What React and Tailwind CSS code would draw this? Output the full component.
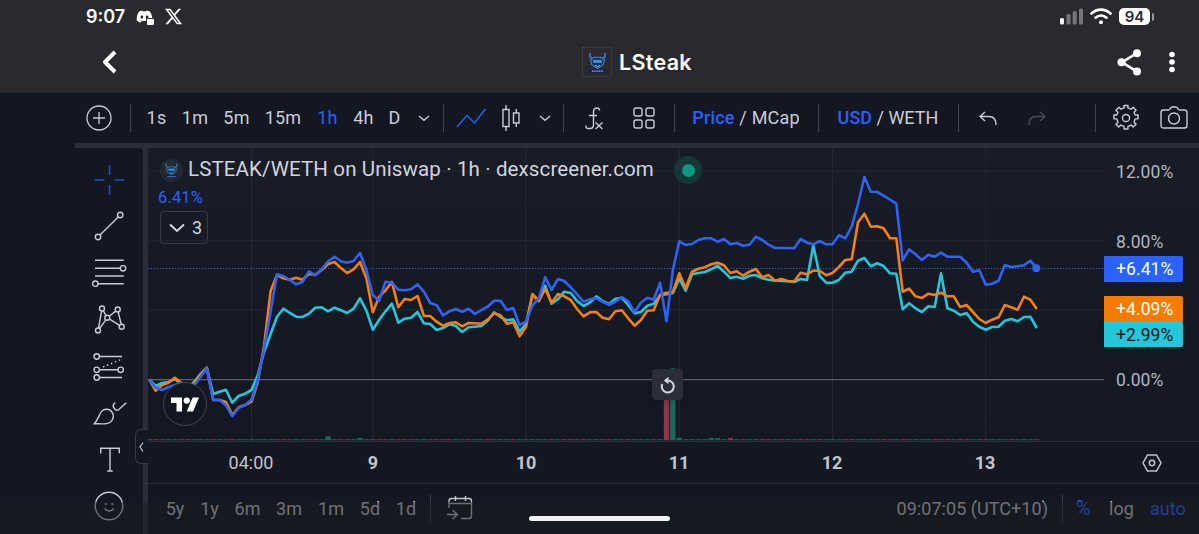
import React from "react";
import { FaDiscord, FaXTwitter } from "react-icons/fa6";

const START_X = 149.3;
const STEP = 6.385;

// one value per hour, vertical position inside the pane
const main = [
  379.5, 387.7, 390, 387, 385, 383, 390, 386, 377, 368.3, 400, 400, 405.3, 416.2, 407.7, 405, 399.5, 380, 348.3, 311.7,
  274.3, 276, 280, 284.3, 282, 271.3, 275.3, 269.3, 261.3, 256.7, 261.3, 262.7, 261, 253, 270, 295, 300.7, 281.7, 282.7, 289.7,
  290.3, 289.3, 284.3, 291.7, 303, 305.3, 315.3, 311.3, 309, 311.7, 308.7, 314, 310, 306.7, 300.7, 300.7, 310, 308, 325, 321.7,
  305.3, 298.3, 277.3, 290, 279, 281, 287.3, 294.3, 301.7, 299.3, 298.3, 301.7, 304.7, 301.7, 297, 301.3, 312, 302.7, 297.7, 299.7,
  282.7, 321.3, 270, 241.3, 245, 244, 240, 238.3, 238.3, 241.7, 239, 244.3, 243, 245.7, 244.7, 236.7, 240, 244.7, 248, 248,
  248, 248.3, 239, 242.7, 244.3, 241, 244.3, 244.3, 235.3, 238.3, 226.7, 204, 177, 191.7, 192, 195.7, 199.7, 203.7, 260.3, 249.3,
  254.3, 260, 254.7, 256.7, 252.7, 256.7, 256.7, 256.7, 262.7, 271.7, 270.3, 284.7, 283.7, 280.7, 265, 267, 266.3, 265.3, 260.7, 268.3,
];

const compareA = [
  379.5, 390.7, 385, 382.7, 377.7, 382.7, 390, 383.3, 375, 367.7, 400, 400, 402, 415, 407.3, 405, 401.7, 382, 345, 291,
  275, 278.3, 279.7, 277.7, 279.7, 274, 274.7, 270, 264, 262, 268, 273, 269.3, 262, 278.3, 312.3, 296.7, 290.3, 282, 307.3,
  299, 300, 296, 316, 316, 321.7, 325.7, 323, 322.3, 326.3, 323, 323.3, 323.7, 319.7, 313.3, 315.3, 323.7, 322.3, 336.3, 326.7,
  294, 301, 289, 302.7, 294, 296.3, 300, 309, 316.3, 312.3, 312, 317.7, 319.3, 311.3, 310.3, 318.3, 325.7, 320, 310.7, 310.3,
  294.7, 292.7, 292, 273.3, 288.3, 271.7, 268.7, 267.3, 264.3, 262.7, 265.3, 273, 271.3, 275.7, 271.7, 269, 277.3, 275, 280.7, 279,
  281, 281.3, 272.7, 274.3, 270.7, 270.7, 275.3, 273, 267, 260, 259.3, 222.3, 213.7, 226.7, 226.3, 228.3, 238.3, 238.3, 291.7, 288.7,
  296.3, 298, 293.7, 295, 292.7, 296.3, 296.3, 307, 305, 312, 319, 323, 319.7, 317.3, 305, 307.3, 309.7, 296.7, 299.7, 309,
];

const compareB = [
  379.5, 386, 383, 382, 379, 384, 388, 382, 374, 368, 394, 391.7, 389.7, 402.7, 396, 393.7, 390, 375, 351.7, 334,
  316.7, 308.7, 313, 316.7, 317, 313.7, 307.7, 307.3, 311.3, 307.7, 310.3, 313, 308.7, 298.3, 310.7, 329.7, 319.7, 311.3, 303.7, 322.7,
  318.7, 317.7, 312, 323.3, 324, 330, 328, 324.3, 326, 332, 327.3, 326.7, 326, 320.7, 312.3, 317, 320.3, 319.3, 331.3, 324,
  295, 301, 285.7, 303.7, 299.3, 291.7, 293, 301, 306, 302.7, 296.3, 301, 304, 298.7, 297.7, 305, 313.3, 312, 305.7, 303.7,
  295.3, 294.3, 293, 278.7, 290.7, 274.3, 273, 272, 269.3, 265.7, 271.7, 278, 276.7, 278.7, 275.7, 275, 278.3, 279.7, 280.7, 281,
  281.3, 282, 279, 280, 245.3, 276, 282.7, 282.7, 280, 272.7, 271.7, 260.7, 258, 266.3, 263.3, 266, 273.3, 273.7, 309.3, 303.3,
  308.3, 312, 306.3, 307, 273.3, 308.3, 310.7, 315, 313, 321.7, 326.7, 329.7, 327, 326.7, 320.7, 319, 321.3, 317, 316.7, 328,
];

// down bars, every other hour closed up
const downBars = [
  1, 2, 5, 6, 10, 12, 13, 20, 21, 22, 25, 26, 30, 31, 35, 36, 37, 39, 40, 41, 44, 45, 46, 47, 50, 53, 54, 57, 63, 65, 66, 67,
  68, 71, 72, 75, 79, 81, 91, 93, 96, 97, 99, 102, 103, 105, 109, 110, 114, 115, 116, 118, 119, 123, 124, 125, 127, 128, 131, 135, 139,
];
const volumeHeights = { 28: 4, 33: 2.2, 81: 60, 82: 72, 83: 2.5, 88: 2.2, 89: 2.2, 91: 2.2 };

const gridY = [171.3, 240.7, 310];
const gridX = [251.5, 372.8, 526, 679.3, 832.5, 985.7];

const toPoints = (values) => values.map((y, i) => `${(START_X + i * STEP).toFixed(1)},${y}`).join(" ");

const intervals = [
  { label: "1s", className: "w-[35px]" },
  { label: "1m", className: "w-[42px]" },
  { label: "5m", className: "w-[41px]" },
  { label: "15m", className: "w-[52px]" },
  { label: "1h", className: "w-[37px] text-[#2962ff]" },
  { label: "4h", className: "w-[35px]" },
  { label: "D", className: "w-[27px]" },
];

const ranges = [
  { label: "5y", className: "w-[34px]" },
  { label: "1y", className: "w-[35px]" },
  { label: "6m", className: "w-[41px]" },
  { label: "3m", className: "w-[42px]" },
  { label: "1m", className: "w-[42px]" },
  { label: "5d", className: "w-[36px]" },
  { label: "1d", className: "w-[36px]" },
];

const Divider = ({ className }) => (
  <div className={`flex shrink-0 justify-center ${className}`}>
    <div className="h-7 w-px bg-[#434651]" />
  </div>
);

const Cell = ({ className, children }) => (
  <button className={`flex shrink-0 items-center justify-center whitespace-nowrap ${className}`}>{children}</button>
);

const Chevron = () => (
  <svg width="12" height="7" viewBox="0 0 12 7" fill="none" stroke="currentColor" strokeWidth="1.4">
    <path d="M1 1l5 4.3L11 1" />
  </svg>
);

const TokenLogo = ({ size }) => (
  <svg width={size} height={size} viewBox="0 0 24 24" fill="none">
    <path d="M3.500 1c-1 4 .5 6.500 5 7M20.500 1c1 4-.5 6.500-5 7" stroke="#3a72b0" strokeWidth="2.200" />
    <path d="M4 8.500L8.500 6h7L20 8.500l-1.500 6L12 19l-6.500-4.500z" fill="#12305a" stroke="#4584c4" strokeWidth="1.200" />
    <path d="M7 9h10v3.500H7z" fill="#3f8fd6" />
    <path d="M9 15l3 2 3-2" stroke="#6db4ea" strokeWidth="1.200" />
    <path d="M1 20h22v3.500H1z" fill="#0f2350" />
    <path d="M5.500 21.800h13" stroke="#7fa6d0" strokeWidth="1.400" strokeDasharray="1.500 .5" />
  </svg>
);

const ToolIcon = ({ className = "", children }) => (
  <button className={`flex h-[46.6px] w-full shrink-0 items-center justify-center ${className}`}>
    <svg className="overflow-visible" width="34" height="34" viewBox="0 0 34 34" fill="none" stroke="currentColor" strokeWidth="1.400">
      {children}
    </svg>
  </button>
);

const Header = () => (
  <header className="h-[93px] shrink-0 bg-[#2a2a2e] text-white">
    <div className="flex h-[33px] items-center pl-[86px] pr-[45px]">
      <span className="w-[50px] font-['Inter'] text-[18px] font-semibold leading-none">9:07</span>
      <span className="relative mr-[10px] h-[18px] w-[18px]">
        <FaDiscord size={17} />
        <span className="absolute bottom-[1px] right-0 h-[7px] w-[8px] rounded-[1.5px] border-l border-t border-[#2a2a2e] bg-white" />
      </span>
      <FaXTwitter size={19} />
      <div className="ml-auto flex items-center gap-[7px]">
        <svg width="23" height="17" viewBox="0 0 23 17">
          <rect x="0" y="10" width="4" height="6.500" rx="1.500" fill="#fff" />
          <rect x="6.500" y="6" width="4" height="10.500" rx="1.500" fill="#77777b" />
          <rect x="12.700" y="3" width="4" height="13.500" rx="1.500" fill="#77777b" />
          <rect x="19" y=".5" width="4" height="16" rx="1.500" fill="#77777b" />
        </svg>
        <svg width="22" height="17" viewBox="0 0 22 17" fill="none" stroke="#fff" strokeWidth="2.600" strokeLinecap="round">
          <path d="M1.500 5.500a13.500 13.500 0 0 1 19 0M5.500 9.700a8 8 0 0 1 11 0" />
          <circle cx="11" cy="14.300" r="2" fill="#fff" stroke="none" />
        </svg>
        <div className="flex items-center gap-[2px]">
          <span className="flex h-[17px] w-[31px] items-center justify-center rounded-[5px] bg-white font-['Inter'] text-[15px] font-semibold leading-none text-[#2a2a2e]">
            94
          </span>
          <span className="h-2 w-[2px] rounded-r bg-[#9a9a9d]" />
        </div>
      </div>
    </div>
    <div className="flex h-[58px] items-center pl-[101px] pr-[24px]">
      <svg width="16" height="24" viewBox="0 0 16 24" fill="none" stroke="currentColor" strokeWidth="4">
        <path d="M14 2L4 12l10 10" strokeLinejoin="round" />
      </svg>
      <div className="ml-[465px] flex items-center">
        <span className="flex h-[30px] w-[30px] items-center justify-center border border-dotted border-[#4a4644]">
          <TokenLogo size={21} />
        </span>
        <h1 className="ml-[7px] pt-px font-['Inter'] text-[21.500px] font-semibold leading-none tracking-[0.3px]">LSteak</h1>
      </div>
      <div className="ml-auto flex items-center gap-[27px]">
        <svg width="25" height="27" viewBox="0 0 25 27" fill="currentColor">
          <path d="M20 4L5 13.300 20 22.600" fill="none" stroke="currentColor" strokeWidth="2.600" />
          <circle cx="20" cy="4.200" r="4" />
          <circle cx="4.500" cy="13.300" r="4" />
          <circle cx="20" cy="22.500" r="4" />
        </svg>
        <svg width="6" height="22" viewBox="0 0 6 22" fill="currentColor">
          <circle cx="3" cy="3.500" r="2.800" />
          <circle cx="3" cy="11" r="2.800" />
          <circle cx="3" cy="18.500" r="2.800" />
        </svg>
      </div>
    </div>
  </header>
);

const Toolbar = () => (
  <div className="ml-[75px] flex h-[50px] shrink-0 items-center text-[18px] tracking-[0.2px] text-[#c9ccd6]">
    <Cell className="w-[48px]">
      <svg width="26" height="26" viewBox="0 0 26 26" fill="none" stroke="currentColor" strokeWidth="1.300">
        <circle cx="13" cy="13" r="12" />
        <path d="M13 7v12M7 13h12" />
      </svg>
    </Cell>
    <Divider className="mr-[2px] w-[14px]" />
    <div className="flex pb-px">
      {intervals.map((item) => (
        <Cell key={item.label} className={item.className}>
          {item.label}
        </Cell>
      ))}
    </div>
    <Cell className="w-[32px]">
      <Chevron />
    </Cell>
    <Divider className="w-[6px]" />
    <Cell className="w-[50px] pr-px text-[#2962ff]">
      <svg width="30" height="20" viewBox="0 0 30 20" fill="none" stroke="currentColor" strokeWidth="1.400">
        <path d="M1 19L11 7.500l7.500 7.500L29.500 1" />
      </svg>
    </Cell>
    <Cell className="w-[30px] pr-px">
      <svg width="18" height="26" viewBox="0 0 18 26" fill="none" stroke="currentColor" strokeWidth="1.400">
        <path d="M1 4.500h6v17H1zM4 0v4.500M4 21.500V26M11.500 8h5.500v10h-5.500zM14.300 4v4M14.300 18v4" />
      </svg>
    </Cell>
    <Cell className="w-[36px] pl-px">
      <Chevron />
    </Cell>
    <Divider className="w-[3px]" />
    <Cell className="w-[58px]">
      <svg width="18" height="23" viewBox="0 0 18 23" fill="none" stroke="currentColor" strokeWidth="1.400">
        <path d="M14.500 3.500V2.500Q14 1 12 1 8.500 1 8.500 5v13q0 3.500-3.500 3.500H3Q1 21.500 1 19v-.5M4 8.500h8M10.500 15.500l7 6.500M17.500 15.500l-7 6.500" />
      </svg>
    </Cell>
    <Cell className="w-[42px] pr-px">
      <svg width="22" height="22" viewBox="0 0 22 22" fill="none" stroke="currentColor" strokeWidth="1.400">
        <rect x="1" y="1" width="8" height="8" rx="2" />
        <rect x="13" y="1" width="8" height="8" rx="2" />
        <rect x="1" y="13" width="8" height="8" rx="2" />
        <rect x="13" y="13" width="8" height="8" rx="2" />
      </svg>
    </Cell>
    <Divider className="w-[18px]" />
    <Cell className="w-[126px] pb-px">
      <span className="font-medium text-[#2962ff]">Price</span>
      <span className="whitespace-pre"> / MCap</span>
    </Cell>
    <Divider className="w-[18px]" />
    <Cell className="w-[122px] pb-px tracking-normal">
      <span className="font-medium text-[#2962ff]">USD</span>
      <span className="whitespace-pre"> / WETH</span>
    </Cell>
    <Divider className="w-[18px]" />
    <Cell className="w-[42px]">
      <svg width="18" height="15" viewBox="0 0 18 15" fill="none" stroke="currentColor" strokeWidth="1.400">
        <path d="M6 1L1 5.500 6 10M1 5.500h9q7 0 7 8.500" />
      </svg>
    </Cell>
    <Cell className="w-[55px] text-[#4a4e59]">
      <svg width="18" height="15" viewBox="0 0 18 15" fill="none" stroke="currentColor" strokeWidth="1.400">
        <path d="M12 1l5 4.500-5 4.500M17 5.500H8Q1 5.500 1 14" />
      </svg>
    </Cell>
    <Divider className="ml-auto w-[10px]" />
    <Cell className="w-[51px]">
      <svg width="30" height="30" viewBox="0 0 28 28" fill="none" stroke="currentColor" strokeWidth="1.300" strokeLinejoin="round">
        <circle cx="14" cy="14" r="3.300" />
        <path d="M12.200 2.300h3.600v2.300l3 1.200 1.900-1.800 2.700 2.700-1.900 1.900 1.100 2.600h2.700v3.600h-2.700l-1.100 3.100 1.900 1.900-2.700 2.700-1.900-1.900-3 1.200v2.400h-3.600v-2.400l-3-1.200-1.900 1.900-2.700-2.700 1.900-1.900-1.100-3.100H2.700v-3.600h2.700l1.100-2.600-1.900-1.900 2.700-2.700 1.900 1.800 3-1.200z" />
      </svg>
    </Cell>
    <Cell className="mr-[3px] w-[45px]">
      <svg width="28" height="24" viewBox="0 0 28 24" fill="none" stroke="currentColor" strokeWidth="1.400">
        <path d="M3.500 4h5q1 0 1.500-1l1-1.500q.3-.5 1-.5h4q.7 0 1 .5l1 1.500q.5 1 1.500 1h5Q27 4 27 6.500v13q0 2.500-2.500 2.500h-21Q1 22 1 19.500v-13Q1 4 3.500 4z" />
        <circle cx="14" cy="12.500" r="5.500" />
      </svg>
    </Cell>
  </div>
);

const Sidebar = () => (
  <aside className="relative flex w-[68px] shrink-0 flex-col rounded-tr-[4px] bg-[#131722] pt-[9px] text-[#c9ccd6]">
    <ToolIcon className="text-[#2450c4]">
      <path d="M2.500 17h10M22.500 17h10M17.500 2v10M17.500 22v10" />
    </ToolIcon>
    <ToolIcon>
      <circle cx="28.200" cy="5" r="2.700" />
      <circle cx="6" cy="27" r="2.700" />
      <path d="M8 25L26.200 7" />
    </ToolIcon>
    <ToolIcon>
      <path d="M3 4.300h28.700M3 12.300h25.300M3 20h28.700M6 27.700h25.700" />
      <circle cx="31" cy="12.300" r="2.700" />
      <circle cx="3.300" cy="27.700" r="2.700" />
    </ToolIcon>
    <ToolIcon>
      <circle cx="10" cy="5.500" r="2.500" />
      <circle cx="25.700" cy="6.500" r="2.500" />
      <circle cx="15.300" cy="14.800" r="2.500" />
      <circle cx="6" cy="27.500" r="2.500" />
      <circle cx="29.700" cy="23.800" r="2.500" />
      <path d="M9.600 8L6.500 25M11.200 7.700l2.900 5M17.200 13.200l6.500-5.100M13.900 16.900L7.500 25.500M17.600 16.200l10 6.200M26.200 9l3 12.300" />
    </ToolIcon>
    <ToolIcon>
      <circle cx="4.700" cy="6.500" r="2.700" />
      <circle cx="4.700" cy="19.800" r="2.700" />
      <circle cx="4.700" cy="27.500" r="2.700" />
      <circle cx="28.700" cy="19.800" r="2.700" />
      <path d="M7.400 6.500H30M7.400 19.800H26M7.400 27.500H30" />
      <path d="M11 17l17-7.200" strokeDasharray="1.500 2.800" />
    </ToolIcon>
    <ToolIcon>
      <path d="M2.300 27.700C8 22 7 13.300 14.700 13.300c6 0 8.500 7.500 4.800 11.800-3 3.500-8 2.700-17.200 2.600zM23.300 6.700l-1.500 1.500c-2 2 1.500 6.800 4.200 6l8.300-7.500" />
    </ToolIcon>
    <ToolIcon>
      <path d="M8.700 10.300v-5h18.600v5M18 5.300V28M15.300 28h5.400" />
    </ToolIcon>
    <ToolIcon>
      <circle cx="17" cy="17" r="13.800" />
      <path d="M12.500 19.500q4.800 5 9.300 0" />
      <circle cx="13.800" cy="15" r="1.100" fill="currentColor" stroke="none" />
      <circle cx="20.300" cy="15" r="1.100" fill="currentColor" stroke="none" />
    </ToolIcon>
    <button className="absolute left-[60px] top-[281px] z-10 flex h-[35px] w-[13px] items-center rounded-l-[6px] border border-r-0 border-[#363a45] bg-[#131722] pl-[3px]">
      <svg width="5" height="10" viewBox="0 0 5 10" fill="none" stroke="#c9ccd6" strokeWidth="1.200">
        <path d="M4 .5L1 5l3 4.500" />
      </svg>
    </button>
  </aside>
);

const Pane = () => (
  <div className="relative h-[293px] w-[956px] shrink-0">
    <svg className="block" width="956" height="293" viewBox="148 148 956 293" fill="none">
      <g stroke="#242833">
        {gridY.map((y) => (
          <path key={y} d={`M148 ${y}H1104`} />
        ))}
        {gridX.map((x) => (
          <path key={x} d={`M${x} 148V441`} />
        ))}
      </g>
      <path d="M148 379.700H1104" stroke="#5d606b" strokeWidth="1.200" />
      {main.map((_, i) => {
        const h = volumeHeights[i] || 1.3;
        return (
          <rect
            key={i}
            x={START_X + i * STEP - 2.7}
            y={440.3 - h}
            width="5.400"
            height={h}
            fill={downBars.includes(i) ? "#8b3548" : "#1a685e"}
            opacity={h > 2 ? 1 : 0.8}
          />
        );
      })}
      <path d="M148 268.500H1104" stroke="#3a56c8" strokeDasharray="1.300 1.700" />
      <g strokeWidth="2.600" strokeLinejoin="round">
        <polyline points={toPoints(compareB)} stroke="#26c6da" />
        <polyline points={toPoints(compareA)} stroke="#f57f17" />
        <polyline points={toPoints(main)} stroke="#2f62f5" />
      </g>
      <circle cx="1036.300" cy="268.300" r="4" fill="#2962ff" />
    </svg>

    <div className="absolute left-[12px] top-[8px] text-[#d1d4dc]">
      <div className="flex h-[28px] items-center">
        <span className="flex h-[23px] w-[23px] items-center justify-center rounded-full bg-[#242833]">
          <TokenLogo size={15} />
        </span>
        <span className="ml-[5px] w-[486px] whitespace-nowrap pb-px text-[20.500px] tracking-[0.130px]">
          LSTEAK/WETH on Uniswap · 1h · dexscreener.com
        </span>
        <span className="flex h-7 w-7 items-center justify-center rounded-full bg-[#17363a]">
          <span className="h-[13px] w-[13px] rounded-full bg-[#089981]" />
        </span>
      </div>
      <div className="-ml-[2px] mt-[2px] h-[24px] text-[16.500px] leading-[24px] tracking-[0.150px] text-[#2962ff]">6.41%</div>
      <button className="mt-[1px] flex h-[33px] w-[48px] items-center rounded-[4px] border border-[#363a45] pl-[8px] text-[18px]">
        <svg width="16" height="10" viewBox="0 0 16 10" fill="none" stroke="currentColor" strokeWidth="2">
          <path d="M1 1.500l7 6.500 7-6.500" />
        </svg>
        <span className="ml-[7px]">3</span>
      </button>
    </div>

    <div className="absolute left-[15px] top-[234px] flex h-[44px] w-[44px] items-center justify-center rounded-full border-[1.500px] border-[#434651] bg-[#131722]">
      <svg width="28" height="15" viewBox="0 4 35.500 18" fill="#fff">
        <path d="M14 22H7V11H0V4h14v18zM28 22h-8l7.500-18h8L28 22z" />
        <circle cx="20" cy="8" r="4" />
      </svg>
    </div>

    <button className="absolute left-[504px] top-[221px] flex h-[31px] w-[31px] items-center justify-center rounded-[4px] bg-[#2a2e39] shadow-md">
      <svg width="16" height="18" viewBox="0 0 16 18" fill="none" stroke="#d1d4dc" strokeWidth="2">
        <path d="M2.300 8A6 6 0 1 0 8 4.500H6" />
        <path d="M8.500 .8v7.400L3.800 4.500z" fill="#d1d4dc" stroke="none" />
      </svg>
    </button>
  </div>
);

const priceTags = [
  { label: "+6.41%", className: "top-[108px] bg-[#2962ff] pt-px text-white" },
  { label: "+4.09%", className: "top-[148px] bg-[#f57c00] pt-px text-white" },
  { label: "+2.99%", className: "top-[173px] bg-[#26c6da] pt-[2px] text-[#131722]" },
];

const priceLabels = [
  { label: "12.00%", className: "top-[11px]" },
  { label: "8.00%", className: "top-[81px]" },
  { label: "0.00%", className: "top-[219px]" },
];

const PriceAxis = () => (
  <div className="relative grow text-[17.500px] tracking-[0.100px] text-[#b2b5be]">
    {priceLabels.map((item) => (
      <span key={item.label} className={`absolute left-[12px] leading-[26px] ${item.className}`}>
        {item.label}
      </span>
    ))}
    {priceTags.map((item) => (
      <span key={item.label} className={`absolute left-0 flex h-[26px] w-[79px] items-center rounded-r-[2px] pl-[12px] ${item.className}`}>
        {item.label}
      </span>
    ))}
  </div>
);

const TimeAxis = () => (
  <div className="flex h-[42px] shrink-0 items-center border-t border-[#2a2e39] pb-px text-center text-[18px] font-bold text-[#c1c4cd]">
    <span className="ml-[53px] w-[100px] font-normal">04:00</span>
    <span className="ml-[48px] w-[48px]">9</span>
    <span className="ml-[105px] w-[48px]">10</span>
    <span className="ml-[105px] w-[48px]">11</span>
    <span className="ml-[105px] w-[48px]">12</span>
    <span className="ml-[105px] w-[48px]">13</span>
    <svg className="ml-auto mr-[37px] mt-px" width="20" height="18" viewBox="0 0 20 18" fill="none" stroke="currentColor" strokeWidth="1.500">
      <path d="M5.500 1h9L19 9l-4.500 8h-9L1 9z" />
      <circle cx="10" cy="9" r="2.700" />
    </svg>
  </div>
);

const BottomBar = () => (
  <div className="flex grow items-center border-t border-[#2a2e39] pl-[10px] text-[18px] text-[#c1c4cd]">
    <div className="flex pb-[2px]">
      {ranges.map((item) => (
        <Cell key={item.label} className={item.className}>
          {item.label}
        </Cell>
      ))}
    </div>
    <Divider className="ml-px w-[10px]" />
    <Cell className="w-[50px] pb-[2px]">
      <svg width="26" height="26" viewBox="0 0 26 26" fill="none" stroke="currentColor" strokeWidth="1.400">
        <path d="M2 13V6q0-2.500 2.500-2.500h17.500q2.500 0 2.500 2.500v15q0 2.500-2.500 2.500H14M2 8.500h22.500M8.500 1v5M18.500 1v5M0 19.500h10M5.500 15l5 4.500-5 4.500" />
      </svg>
    </Cell>
    <div className="ml-auto flex items-center">
      <span className="pb-[2px] tracking-[0.050px]">09:07:05 (UTC+10)</span>
      <Divider className="w-[28px]" />
      <span className="w-[33px] pb-[2px] text-[20px] leading-none text-[#2962ff]">%</span>
      <span className="w-[41px] pb-[2px]">log</span>
      <span className="w-[49px] pb-[2px] text-[#2962ff]">auto</span>
    </div>
  </div>
);

export default function App() {
  return (
    <div className="relative flex h-[534px] w-[1199px] flex-col overflow-hidden bg-[#131722] font-['Roboto',sans-serif]">
      <Header />
      <Toolbar />
      <div className="ml-[75px] flex min-h-0 grow gap-[5px] bg-[#2a2e39] pt-[5px]">
        <Sidebar />
        <main className="flex min-w-0 grow flex-col rounded-tl-[4px] bg-[#131722]">
          <div className="flex h-[293px] shrink-0 rounded-tl-[4px] bg-linear-to-b from-[#181c27] to-[#131722]">
            <Pane />
            <PriceAxis />
          </div>
          <TimeAxis />
          <BottomBar />
        </main>
      </div>
      {/* system navigation area */}
      <div className="absolute inset-x-0 bottom-0 flex h-[32px] justify-center bg-[#1b1b1f]/50 pt-[14px]">
        <div className="h-[5px] w-[141px] rounded-full bg-[#f1f1f1]" />
      </div>
    </div>
  );
}
